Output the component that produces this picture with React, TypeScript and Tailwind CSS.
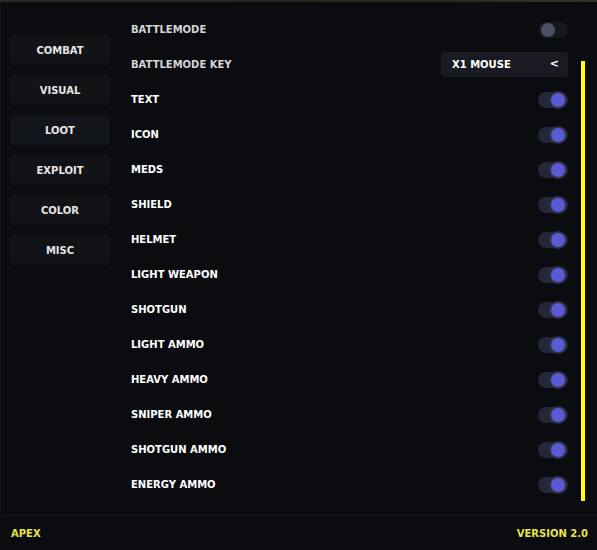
import { useState } from "react";

const tabs = ["COMBAT", "VISUAL", "LOOT", "EXPLOIT", "COLOR", "MISC"];

const items = [
    "TEXT",
    "ICON",
    "MEDS",
    "SHIELD",
    "HELMET",
    "LIGHT WEAPON",
    "SHOTGUN",
    "LIGHT AMMO",
    "HEAVY AMMO",
    "SNIPER AMMO",
    "SHOTGUN AMMO",
    "ENERGY AMMO",
];

const font = { fontFamily: '"DejaVu Sans", "Liberation Sans", sans-serif' };

function Toggle({ on, onClick }: { on: boolean; onClick: () => void }) {
    return (
        <button
            onClick={onClick}
            className={`relative h-[16px] w-[30px] rounded-full ${
                on ? "bg-[#242739]" : "bg-[#15181e]"
            }`}
        >
            <span
                className={`absolute top-1/2 -translate-y-1/2 h-[14px] w-[14px] rounded-full ${
                    on
                        ? "left-[13px] bg-[#5a5bd4] ring-2 ring-[#2f3249]"
                        : "left-[3px] bg-[#4a5163]"
                }`}
            />
        </button>
    );
}

export default function App() {
    const [active, setActive] = useState("LOOT");
    const [battle, setBattle] = useState(false);
    const [state, setState] = useState<Record<string, boolean>>(
        Object.fromEntries(items.map((i) => [i, true]))
    );

    return (
        <div
            className="h-[550px] w-[597px] bg-[#0a0c0f] flex flex-col text-[10px] font-bold"
            style={font}
        >
            {/* top strip */}
            <div className="h-[2px] bg-gradient-to-r from-[#2a2924] via-[#26251f] to-[#33301f]" />

            <div className="flex-1 flex border-l border-[#121418]">
                {/* sidebar */}
                <div className="w-[120px] pl-[9px] pt-[33px] flex flex-col gap-[10px]">
                    {tabs.map((t) => (
                        <button
                            key={t}
                            onClick={() => setActive(t)}
                            className={`h-[30px] w-[100px] rounded-[3px] text-[#e6e6e6] ${
                                active === t ? "bg-[#121519]" : "bg-[#111317]"
                            }`}
                        >
                            {t}
                        </button>
                    ))}
                </div>

                {/* options */}
                <div className="w-[447px] pl-[10px] pt-[10px] flex flex-col">
                    <div className="h-[35px] flex items-center justify-between">
                        <span className="text-[#d4d6da]">BATTLEMODE</span>
                        <Toggle on={battle} onClick={() => setBattle(!battle)} />
                    </div>
                    <div className="h-[35px] flex items-center justify-between">
                        <span className="text-[#d4d6da]">BATTLEMODE KEY</span>
                        <button className="h-[25px] w-[127px] rounded-[4px] bg-[#181b22] flex items-center justify-between pl-[11px] pr-[9px] text-white">
                            <span>X1 MOUSE</span>
                            <span className="text-[11px]">&lt;</span>
                        </button>
                    </div>
                    {items.map((i) => (
                        <div key={i} className="h-[35px] flex items-center justify-between">
                            <span className="text-white">{i}</span>
                            <Toggle
                                on={state[i]}
                                onClick={() => setState({ ...state, [i]: !state[i] })}
                            />
                        </div>
                    ))}
                </div>

                {/* scrollbar */}
                <div className="pl-[13px] pt-[59px]">
                    <div className="h-[440px] w-[4px] bg-[#ffff00]" />
                </div>
            </div>

            {/* footer */}
            <div className="h-[35px] border-t border-[#15171b] flex items-center justify-between pl-[11px] pr-[9px] text-[#e9e24c]">
                <span>APEX</span>
                <span>VERSION 2.0</span>
            </div>
        </div>
    );
}
